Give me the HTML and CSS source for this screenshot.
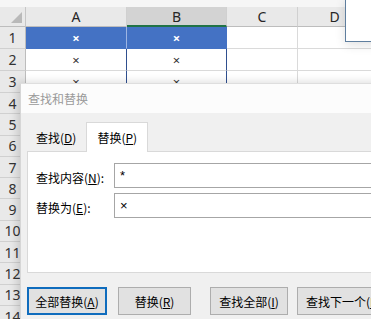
FILE: index.html
```html
<!DOCTYPE html>
<html lang="zh-CN">
<head>
    <meta charset="UTF-8">
    <title>查找和替换</title>
    <link rel="stylesheet" href="styles.css">
</head>
<body>
    <div class="topbar"></div>
    <div class="sheet">
        <div class="corner"></div>
        <div class="hd">A</div>
        <div class="hd hd-sel">B</div>
        <div class="hd">C</div>
        <div class="hd">D</div>

        <div class="rh">1</div>
        <div class="c sel sel-a">×</div>
        <div class="c sel">×</div>
        <div class="c"></div>
        <div class="c"></div>

        <div class="rh">2</div>
        <div class="c mark">×</div>
        <div class="c mark">×</div>
        <div class="c"></div>
        <div class="c"></div>

        <div class="rh">3</div>
        <div class="c mark">×</div>
        <div class="c mark">×</div>
        <div class="c"></div>
        <div class="c"></div>

        <div class="rh">4</div><div class="c"></div><div class="c"></div><div class="c"></div><div class="c"></div>
        <div class="rh">5</div><div class="c"></div><div class="c"></div><div class="c"></div><div class="c"></div>
        <div class="rh">6</div><div class="c"></div><div class="c"></div><div class="c"></div><div class="c"></div>
        <div class="rh">7</div><div class="c"></div><div class="c"></div><div class="c"></div><div class="c"></div>
        <div class="rh">8</div><div class="c"></div><div class="c"></div><div class="c"></div><div class="c"></div>
        <div class="rh">9</div><div class="c"></div><div class="c"></div><div class="c"></div><div class="c"></div>
        <div class="rh">10</div><div class="c"></div><div class="c"></div><div class="c"></div><div class="c"></div>
        <div class="rh">11</div><div class="c"></div><div class="c"></div><div class="c"></div><div class="c"></div>
        <div class="rh">12</div><div class="c"></div><div class="c"></div><div class="c"></div><div class="c"></div>
        <div class="rh">13</div><div class="c"></div><div class="c"></div><div class="c"></div><div class="c"></div>
        <div class="rh">14</div><div class="c"></div><div class="c"></div><div class="c"></div><div class="c"></div>
    </div>

    <!-- window peeking in at the top right -->
    <div class="other-win"></div>

    <div class="dialog">
        <div class="title">查找和替换</div>
        <div class="tabs">
            <div class="tab">查找(<u>D</u>)</div>
            <div class="tab tab-active">替换(<u>P</u>)</div>
        </div>
        <div class="panel">
            <div class="field">
                <label class="lbl">查找内容(<u>N</u>):</label>
                <div class="input">*</div>
            </div>
            <div class="field">
                <label class="lbl">替换为(<u>E</u>):</label>
                <div class="input">×</div>
            </div>
        </div>
        <div class="buttons">
            <button class="btn btn-focus">全部替换(<u>A</u>)</button>
            <button class="btn btn-replace">替换(<u>R</u>)</button>
            <button class="btn btn-findall">查找全部(<u>I</u>)</button>
            <button class="btn btn-next">查找下一个(<u>F</u>)</button>
        </div>
    </div>
</body>
</html>
```

FILE: styles.css
```css
body {
    margin: 0;
    padding: 0;
    background-color: #fff;
    font-family: "Noto Sans", "Noto Sans CJK SC", sans-serif;
    position: relative;
    width: 371px;
    height: 319px;
    overflow: hidden;
}

.topbar {
    height: 7px;
    background-color: #f6f6f6;
}

/* Spreadsheet grid */
.sheet {
    display: grid;
    grid-template-columns: 26px 101px 100px 71px 74px;
    grid-template-rows: 20px 22px 22px 22px repeat(11, 21.3px);
}

.corner {
    background-color: #e9e9e9;
    border-right: 1px solid #c6c6c6;
    border-bottom: 1px solid #bdbdbd;
    box-sizing: border-box;
    position: relative;
}

.corner::after {
    content: "";
    position: absolute;
    right: 3px;
    bottom: 3px;
    border-left: 11px solid transparent;
    border-bottom: 11px solid #b9b9b9;
}

.hd {
    background-color: #e9e9e9;
    border-right: 1px solid #d0d0d0;
    border-bottom: 1px solid #bdbdbd;
    box-sizing: border-box;
    color: #262626;
    font-size: 14px;
    display: flex;
    align-items: center;
    justify-content: center;
}

.hd-sel {
    background-color: #d3d3d3;
    border-bottom: 2px solid #217346;
}

.rh {
    background-color: #e9e9e9;
    border-right: 1px solid #bdbdbd;
    border-bottom: 1px solid #d0d0d0;
    box-sizing: border-box;
    color: #333;
    font-size: 14px;
    display: flex;
    align-items: center;
    justify-content: center;
}

.c {
    border-right: 1px solid #dadada;
    border-bottom: 1px solid #dadada;
    box-sizing: border-box;
    font-size: 13px;
    color: #333;
    display: flex;
    align-items: center;
    justify-content: center;
}

.sel {
    background-color: #4472c4;
    color: #fff;
    font-weight: bold;
    border-right-color: #4472c4;
    border-bottom-color: #4472c4;
}

.sel-a {
    border-right-color: #9db5e3;
}

.mark {
    border-right-color: #2f4f8f;
}

/* top right window */
.other-win {
    position: absolute;
    left: 345px;
    top: -2px;
    width: 40px;
    height: 42px;
    background-color: #fff;
    border: 1px solid #5f7e9e;
    box-shadow: 0 3px 10px rgba(0, 0, 0, 0.12);
}

/* Find & replace dialog */
.dialog {
    position: absolute;
    left: 20px;
    top: 83px;
    width: 370px;
    height: 250px;
    background-color: #f0f0f0;
    border-left: 1px solid #d6d6d6;
    border-top: 1px solid #dedede;
    box-shadow: -3px -1px 8px rgba(0, 0, 0, 0.14);
    font-family: "Noto Sans CJK SC", sans-serif;
    font-size: 12px;
    color: #000;
}

.title {
    height: 29px;
    background-color: #fcfcfc;
    color: #9a9a9a;
    padding-left: 7px;
    line-height: 29px;
}

.tabs {
    display: flex;
    align-items: flex-end;
    height: 38px;
    padding-left: 6px;
}

.tab {
    height: 28px;
    line-height: 30px;
    padding: 0 9px;
    margin-right: 3px;
}

.tab-active {
    height: 29px;
    background-color: #fff;
    border: 1px solid #d9d9d9;
    border-bottom: none;
    padding: 0 10px;
    margin-left: -2px;
    margin-bottom: -1px;
    position: relative;
}

.panel {
    margin-left: 6px;
    height: 122px;
    background-color: #fff;
    border: 1px solid #d9d9d9;
    box-sizing: border-box;
    padding: 11px 0 0 8px;
    display: flex;
    flex-direction: column;
    gap: 5px;
}

.field {
    display: flex;
    align-items: center;
}

.lbl {
    width: 78px;
    padding-top: 3px;
}

.input {
    flex: 1;
    height: 25px;
    border: 1px solid #a6a6a6;
    border-right: none;
    box-sizing: border-box;
    padding-left: 5px;
    line-height: 23px;
    font-family: "Liberation Sans", sans-serif;
    font-size: 13px;
}

.buttons {
    display: flex;
    padding: 14px 0 0 6px;
}

.btn {
    height: 28px;
    background-color: #e1e1e1;
    border: 1px solid #adadad;
    font-family: "Noto Sans CJK SC", sans-serif;
    font-size: 12px;
    color: #000;
    padding: 0;
    white-space: nowrap;
}

.btn-focus {
    width: 80px;
    border: 2px solid #0f6cbd;
}

.btn-replace {
    width: 73px;
    margin-left: 11px;
}

.btn-findall {
    width: 78px;
    margin-left: 19px;
}

.btn-next {
    width: 90px;
    margin-left: 9px;
    text-align: left;
    padding-left: 8px;
}
```
